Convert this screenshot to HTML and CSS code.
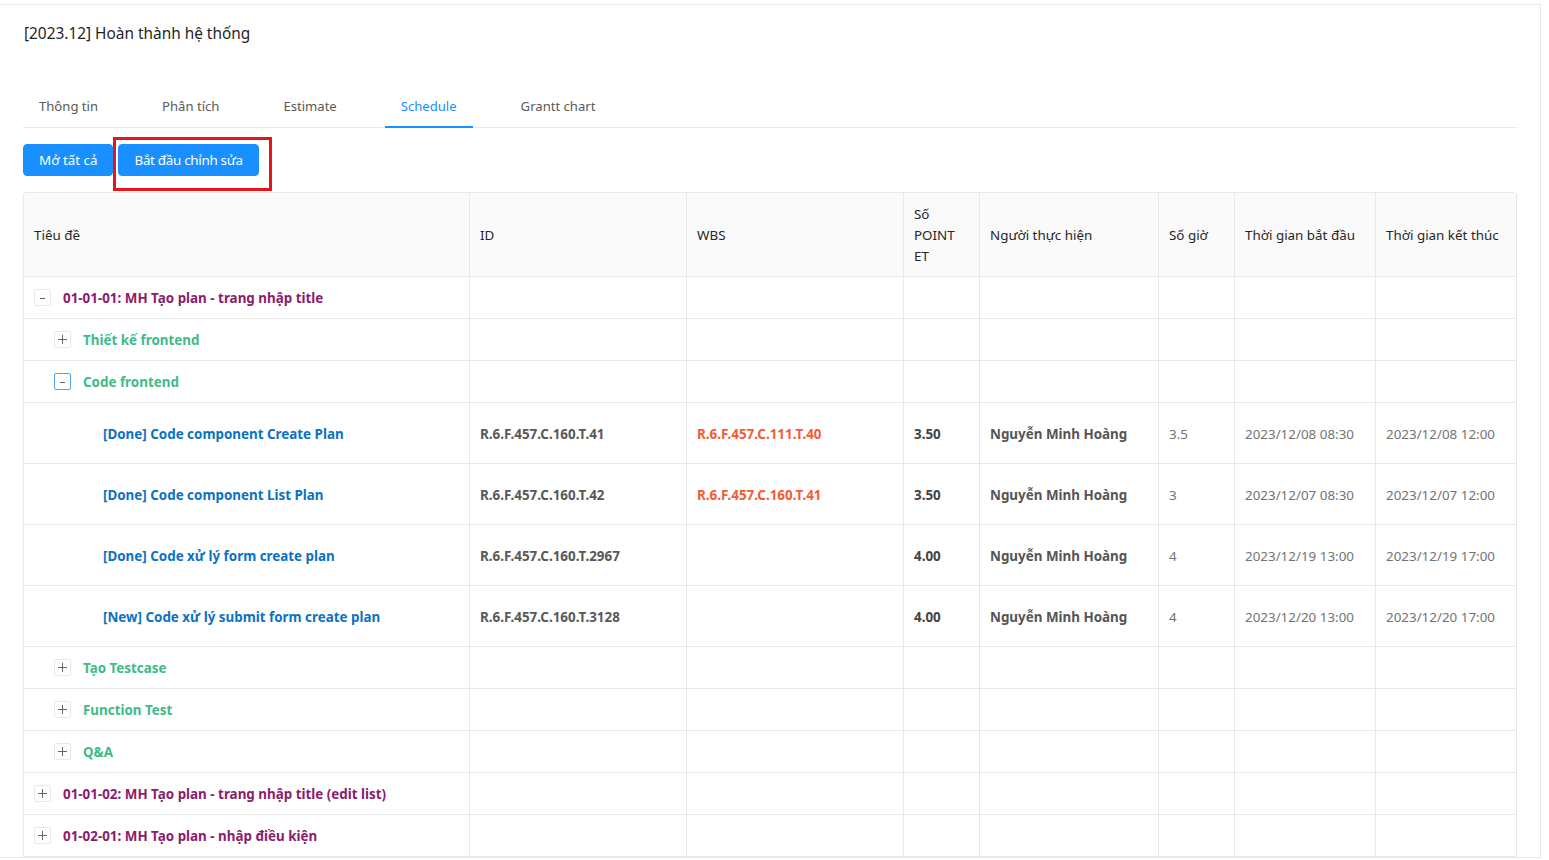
FILE: index.html
```html
<!DOCTYPE html>
<html lang="vi">
<head>
<meta charset="utf-8">
<title>Schedule</title>
<link rel="stylesheet" href="styles.css">
</head>
<body>
<div class="card">
  <h1 class="page-title">[2023.12] Hoàn thành hệ thống</h1>

  <div class="tabs">
    <div class="tab">Thông tin</div>
    <div class="tab">Phân tích</div>
    <div class="tab">Estimate</div>
    <div class="tab active">Schedule</div>
    <div class="tab">Grantt chart</div>
  </div>

  <div class="toolbar">
    <button class="btn">Mở tất cả</button>
    <span class="highlight-wrap">
      <button class="btn btn-tight">Bắt đầu chỉnh sửa</button>
      <span class="red-box"></span>
    </span>
  </div>

  <table class="grid">
    <colgroup>
      <col class="c-title"><col class="c-id"><col class="c-wbs"><col class="c-pt">
      <col class="c-user"><col class="c-hours"><col class="c-date"><col class="c-date">
    </colgroup>
    <thead>
      <tr>
        <th>Tiêu đề</th>
        <th>ID</th>
        <th>WBS</th>
        <th>Số POINT ET</th>
        <th>Người thực hiện</th>
        <th>Số giờ</th>
        <th class="nowrap">Thời gian bắt đầu</th>
        <th class="nowrap">Thời gian kết thúc</th>
      </tr>
    </thead>
    <tbody>
      <tr>
        <td><div class="tcell"><span class="expander minus"></span><span class="lv0">01-01-01: MH Tạo plan - trang nhập title</span></div></td>
        <td></td><td></td><td></td><td></td><td></td><td></td><td></td>
      </tr>
      <tr>
        <td><div class="tcell l1"><span class="expander plus"></span><span class="lv1">Thiết kế frontend</span></div></td>
        <td></td><td></td><td></td><td></td><td></td><td></td><td></td>
      </tr>
      <tr>
        <td><div class="tcell l1"><span class="expander minus focus"></span><span class="lv1">Code frontend</span></div></td>
        <td></td><td></td><td></td><td></td><td></td><td></td><td></td>
      </tr>
      <tr class="task">
        <td><div class="tcell l2"><span class="lv2">[Done] Code component Create Plan</span></div></td>
        <td class="id">R.6.F.457.C.160.T.41</td>
        <td class="wbs">R.6.F.457.C.111.T.40</td>
        <td class="pt">3.50</td>
        <td class="user">Nguyễn Minh Hoàng</td>
        <td class="num">3.5</td>
        <td class="num">2023/12/08 08:30</td>
        <td class="num">2023/12/08 12:00</td>
      </tr>
      <tr class="task">
        <td><div class="tcell l2"><span class="lv2">[Done] Code component List Plan</span></div></td>
        <td class="id">R.6.F.457.C.160.T.42</td>
        <td class="wbs">R.6.F.457.C.160.T.41</td>
        <td class="pt">3.50</td>
        <td class="user">Nguyễn Minh Hoàng</td>
        <td class="num">3</td>
        <td class="num">2023/12/07 08:30</td>
        <td class="num">2023/12/07 12:00</td>
      </tr>
      <tr class="task">
        <td><div class="tcell l2"><span class="lv2">[Done] Code xử lý form create plan</span></div></td>
        <td class="id">R.6.F.457.C.160.T.2967</td>
        <td class="wbs"></td>
        <td class="pt">4.00</td>
        <td class="user">Nguyễn Minh Hoàng</td>
        <td class="num">4</td>
        <td class="num">2023/12/19 13:00</td>
        <td class="num">2023/12/19 17:00</td>
      </tr>
      <tr class="task">
        <td><div class="tcell l2"><span class="lv2">[New] Code xử lý submit form create plan</span></div></td>
        <td class="id">R.6.F.457.C.160.T.3128</td>
        <td class="wbs"></td>
        <td class="pt">4.00</td>
        <td class="user">Nguyễn Minh Hoàng</td>
        <td class="num">4</td>
        <td class="num">2023/12/20 13:00</td>
        <td class="num">2023/12/20 17:00</td>
      </tr>
      <tr>
        <td><div class="tcell l1"><span class="expander plus"></span><span class="lv1">Tạo Testcase</span></div></td>
        <td></td><td></td><td></td><td></td><td></td><td></td><td></td>
      </tr>
      <tr>
        <td><div class="tcell l1"><span class="expander plus"></span><span class="lv1">Function Test</span></div></td>
        <td></td><td></td><td></td><td></td><td></td><td></td><td></td>
      </tr>
      <tr>
        <td><div class="tcell l1"><span class="expander plus"></span><span class="lv1">Q&amp;A</span></div></td>
        <td></td><td></td><td></td><td></td><td></td><td></td><td></td>
      </tr>
      <tr>
        <td><div class="tcell"><span class="expander plus"></span><span class="lv0">01-01-02: MH Tạo plan - trang nhập title (edit list)</span></div></td>
        <td></td><td></td><td></td><td></td><td></td><td></td><td></td>
      </tr>
      <tr>
        <td><div class="tcell"><span class="expander plus"></span><span class="lv0">01-02-01: MH Tạo plan - nhập điều kiện</span></div></td>
        <td></td><td></td><td></td><td></td><td></td><td></td><td></td>
      </tr>
    </tbody>
  </table>
</div>
</body>
</html>
```

FILE: styles.css
```css
* { box-sizing: border-box; }

html, body {
  margin: 0;
  padding: 0;
  background: #fff;
  overflow: hidden;
}

body {
  font-family: "Segoe UI", "Noto Sans", "Open Sans", sans-serif;
  font-size: 13.4px;
  line-height: 21px;
  color: rgba(0, 0, 0, 0.85);
}

.card {
  margin-top: 4px;
  width: 1541px;
  height: 854px;
  border: 1px solid #e8e8e8;
  border-left: none;
  padding: 18px 23px 0 23px;
  overflow: hidden;
}

.page-title {
  margin: 0 0 36px 1px;
  font-size: 15.4px;
  line-height: 22px;
  font-weight: 400;
  color: #1f1f1f;
}

.tabs {
  display: flex;
  border-bottom: 1px solid #e8e8e8;
}

.tab {
  padding: 15px 16px 9px;
  margin-right: 32px;
  font-size: 13.1px;
  color: #595959;
  margin-bottom: -1px;
  border-bottom: 2px solid transparent;
}

.tab.active {
  color: #1890ff;
  border-bottom-color: #1890ff;
}

.toolbar {
  display: flex;
  gap: 5px;
  margin: 16px 0 16px 0;
}

.btn {
  height: 32px;
  padding: 0 15px;
  border: 1px solid #1890ff;
  border-radius: 4px;
  background: #1890ff;
  color: #fff;
  font-family: inherit;
  font-size: 13.4px;
  line-height: 30px;
}

.btn-tight { letter-spacing: -0.3px; }

.highlight-wrap {
  position: relative;
  display: inline-block;
  height: 32px;
}

.red-box {
  position: absolute;
  left: -5px;
  right: -13px;
  top: -7px;
  bottom: -15px;
  border: 3px solid #e8141b;
  pointer-events: none;
}

.grid {
  table-layout: fixed;
  border-collapse: separate;
  border-spacing: 0;
  width: 1494px;
  border-top: 1px solid #e8e8e8;
  border-left: 1px solid #e8e8e8;
  border-radius: 4px 4px 0 0;
}

.c-title { width: 446px; }
.c-id { width: 217px; }
.c-wbs { width: 217px; }
.c-pt { width: 76px; }
.c-user { width: 179px; }
.c-hours { width: 76px; }
.c-date { width: 141px; }

.grid th,
.grid td {
  border-right: 1px solid #e8e8e8;
  border-bottom: 1px solid #e8e8e8;
  padding: 11px 10px 9px;
  text-align: left;
  vertical-align: middle;
}

.grid th {
  background: #fafafa;
  font-weight: 400;
  color: #262626;
  height: 84px;
}

.grid th.nowrap { white-space: nowrap; }

.grid td {
  height: 42px;
  white-space: nowrap;
}

.grid tr.task td { height: 61px; }

.tcell {
  display: flex;
  align-items: center;
  height: 21px;
}

.tcell.l1 { padding-left: 20px; }
.tcell.l2 { padding-left: 69px; }

.expander {
  position: relative;
  flex: none;
  width: 17px;
  height: 17px;
  margin-top: -2px;
  border: 1px solid #e8e8e8;
  border-radius: 2px;
  background: #fff;
  margin-right: 12px;
}

.expander.focus { border-color: #40a9ff; }

.expander::before,
.expander::after {
  content: "";
  position: absolute;
  background: #666;
}

.expander.plus::before {
  left: 3px;
  top: 7px;
  width: 9px;
  height: 1px;
}

.expander.plus::after {
  left: 7px;
  top: 3px;
  width: 1px;
  height: 9px;
}

.expander.minus::before {
  left: 5px;
  top: 8px;
  width: 5px;
  height: 1px;
}

.expander.minus::after { display: none; }

.lv0 { color: #8b1c6c; font-weight: 700; }
.lv1 { color: #3dbb88; font-weight: 700; }
.lv2 { color: #0b72c2; font-weight: 700; }

.id { color: #595959; font-weight: 700; }
.wbs { color: #f25c37; font-weight: 700; }
.pt { color: #434343; font-weight: 700; }
.user { color: #555; font-weight: 700; }
.num { color: #737373; }
```
